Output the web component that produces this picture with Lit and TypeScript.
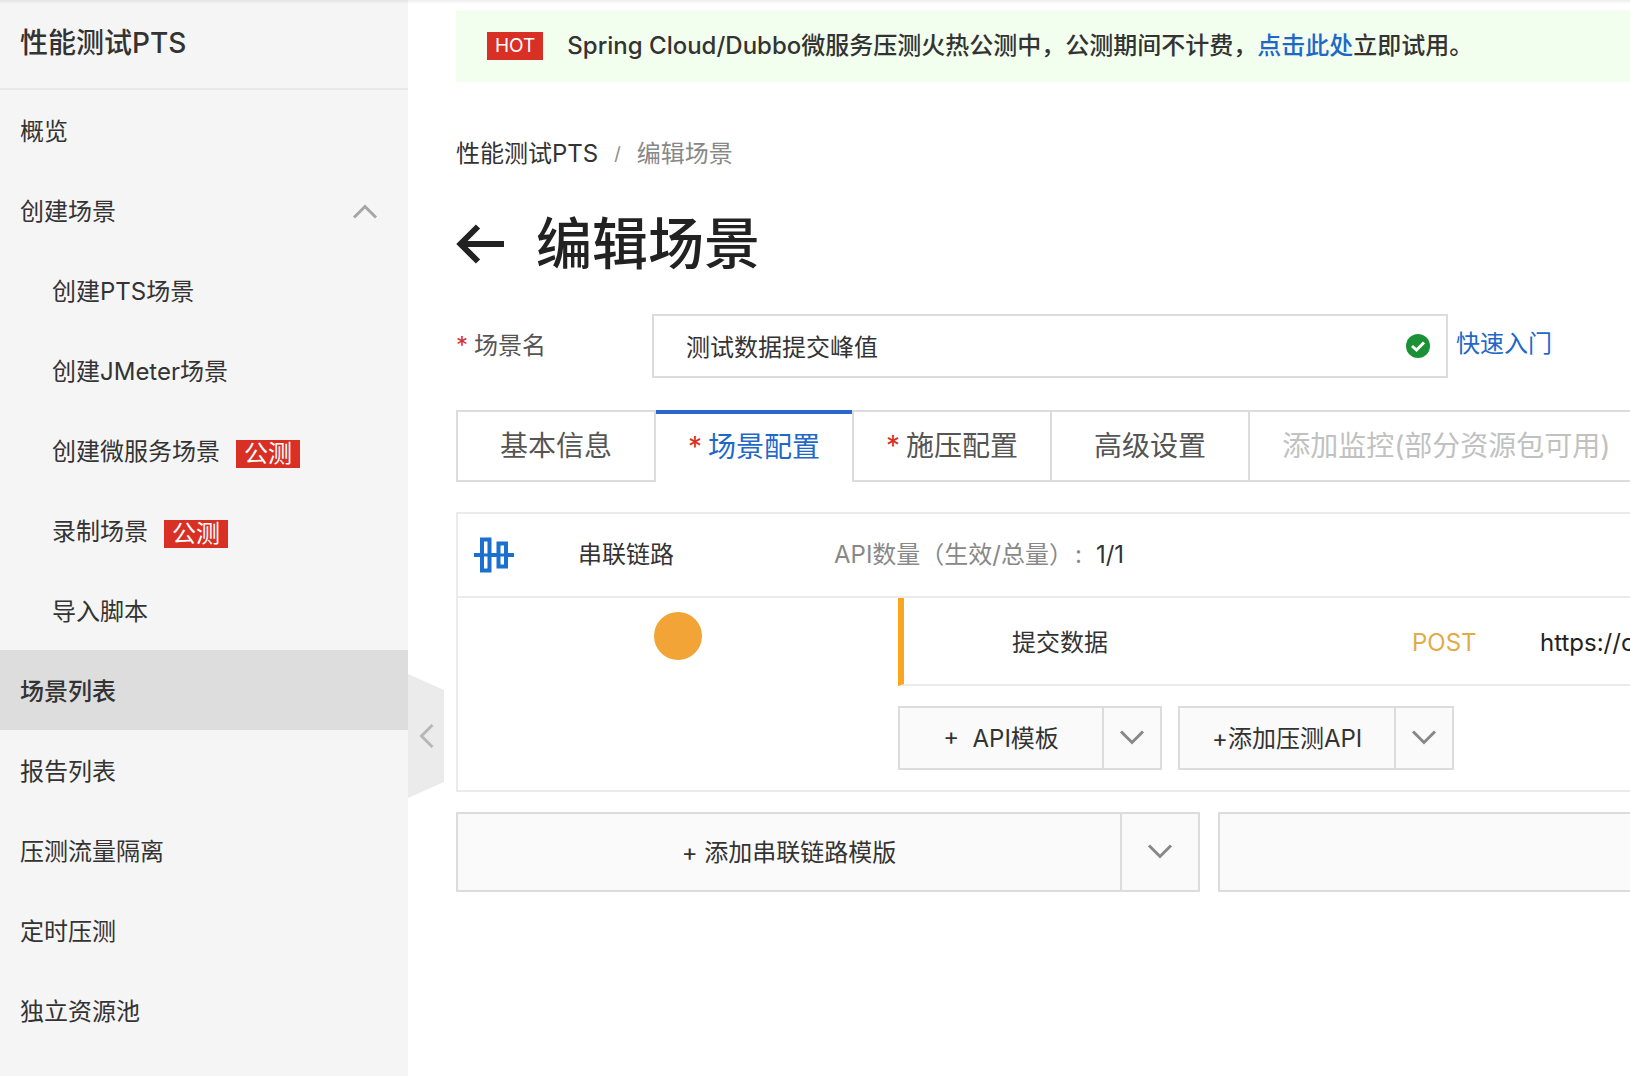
import { LitElement, html, css, svg } from "lit";
import { customElement, property, state } from "lit/decorators.js";
import { classMap } from "lit/directives/class-map.js";

interface NavItem {
  label: string;
  sub?: boolean;
  badge?: string;
  expanded?: boolean;
}

const NAV: NavItem[] = [
  { label: "概览" },
  { label: "创建场景", expanded: true },
  { label: "创建PTS场景", sub: true },
  { label: "创建JMeter场景", sub: true },
  { label: "创建微服务场景", sub: true, badge: "公测" },
  { label: "录制场景", sub: true, badge: "公测" },
  { label: "导入脚本", sub: true },
  { label: "场景列表" },
  { label: "报告列表" },
  { label: "压测流量隔离" },
  { label: "定时压测" },
  { label: "独立资源池" },
];

interface Tab {
  label: string;
  required?: boolean;
  disabled?: boolean;
}

const TABS: Tab[] = [
  { label: "基本信息" },
  { label: "场景配置", required: true },
  { label: "施压配置", required: true },
  { label: "高级设置" },
  { label: "添加监控(部分资源包可用)", disabled: true },
];

const CHEVRONS: Record<string, string> = {
  up: "M2 18.5 13 7.5 24 18.5",
  down: "M2 7.5 13 18.5 24 7.5",
  left: "M18.5 2 7.5 13 18.5 24",
};

@customElement("pts-chevron")
export class PtsChevron extends LitElement {
  @property() direction = "down";

  static styles = css`
    :host {
      display: block;
      width: 26px;
      height: 26px;
    }
    .icon {
      display: block;
    }
  `;

  render() {
    return html`<svg class="icon" width="26" height="26" viewBox="0 0 26 26" fill="none" aria-hidden="true">
      ${svg`<path d=${CHEVRONS[this.direction]} stroke="currentColor" stroke-width="3"/>`}
    </svg>`;
  }
}

@customElement("pts-sidebar")
export class PtsSidebar extends LitElement {
  @state() private current = "场景列表";

  static styles = css`
    :host {
      display: block;
      position: relative;
      background: #f5f5f5;
      color: #333;
    }
    .title {
      margin: 0;
      height: 90px;
      line-height: 86px;
      padding-left: 20px;
      border-bottom: 2px solid #e8e8e8;
      font-size: 28px;
      font-weight: 500;
      box-sizing: border-box;
    }
    .item {
      display: flex;
      align-items: center;
      height: 80px;
      padding: 4px 30px 0 20px;
      box-sizing: border-box;
      color: inherit;
      text-decoration: none;
      font-size: 24px;
      line-height: 32px;
    }
    .sub {
      padding-left: 52px;
    }
    .current {
      background: #ddd;
      font-weight: 500;
    }
    .badge {
      margin: 4px 0 0 16px;
      padding: 0 8px;
      height: 28px;
      line-height: 28px;
      background: #d93026;
      color: #fff;
    }
    .arrow {
      margin-left: auto;
      color: #a6a6a6;
    }
    .collapse {
      position: absolute;
      left: 100%;
      top: 674px;
      width: 36px;
      height: 124px;
      padding: 0 0 0 6px;
      border: 0;
      background: #ebebeb;
      color: #b8b8b8;
      clip-path: polygon(0 0, 100% 16px, 100% 108px, 0 100%);
    }
  `;

  private select(event: Event, label: string) {
    event.preventDefault();
    this.current = label;
  }

  render() {
    return html`
      <h2 class="title">性能测试PTS</h2>
      <nav>
        ${NAV.map(
          (item) => html`<a
            href="#"
            class=${classMap({ item: true, sub: !!item.sub, current: item.label === this.current })}
            @click=${(e: Event) => this.select(e, item.label)}
            ><span>${item.label}</span>${item.badge ? html`<span class="badge">${item.badge}</span>` : ""}${item.expanded
              ? html`<pts-chevron class="arrow" direction="up"></pts-chevron>`
              : ""}</a
          >`,
        )}
      </nav>
      <button class="collapse" aria-label="收起导航"><pts-chevron direction="left"></pts-chevron></button>
    `;
  }
}

@customElement("pts-split-button")
export class PtsSplitButton extends LitElement {
  @property() label = "";
  @property({ type: Boolean, reflect: true }) wide = false;

  static styles = css`
    :host {
      display: flex;
      height: 64px;
      box-sizing: border-box;
      border: 2px solid #dcdcdc;
      background: #fafafa;
    }
    :host([wide]) {
      height: 80px;
    }
    .main,
    .more {
      border: 0;
      background: none;
      font: inherit;
      font-size: 24px;
      line-height: 32px;
      color: #333;
      white-space: pre;
    }
    .main {
      flex: 1;
      padding: 2px 32px 0;
    }
    .more {
      display: flex;
      align-items: center;
      justify-content: center;
      width: 58px;
      padding: 0 0 2px;
      border-left: 2px solid #dcdcdc;
      color: #888;
    }
    :host([wide]) .more {
      width: 78px;
    }
  `;

  render() {
    return html`
      <button class="main">${this.label}</button>
      <button class="more" aria-label="更多选项"><pts-chevron></pts-chevron></button>
    `;
  }
}

@customElement("app-root")
export class AppRoot extends LitElement {
  @state() private tab = "场景配置";

  static styles = css`
    :host {
      display: block;
      position: relative;
      background: #fff;
      color: #333;
      font-family: Inter, "Noto Sans CJK SC", sans-serif;
      font-size: 24px;
      line-height: 32px;
    }
    .shade {
      position: absolute;
      inset: 0 0 auto 0;
      height: 4px;
      background: linear-gradient(rgba(0, 0, 0, 0.07), rgba(0, 0, 0, 0));
    }
    .shell {
      display: grid;
      grid-template-columns: 408px minmax(0, 1fr);
      min-height: 100vh;
    }
    .content {
      padding: 10px 0 40px 48px;
      overflow: hidden;
      white-space: nowrap;
    }
    .link {
      color: #1f68c8;
      text-decoration: none;
    }
    .banner {
      display: flex;
      align-items: center;
      height: 72px;
      box-sizing: border-box;
      padding-left: 31px;
      background: #f3ffee;
      font-weight: 500;
    }
    .hot {
      margin-right: 24px;
      padding: 0 8px;
      height: 28px;
      line-height: 28px;
      background: #d93026;
      color: #fff;
      font-size: 19px;
      font-weight: 400;
    }
    .crumbs {
      display: flex;
      align-items: center;
      gap: 16px;
      margin-top: 56px;
      color: #888;
    }
    .crumb {
      color: #333;
      text-decoration: none;
    }
    .slash {
      font-size: 18px;
    }
    .head {
      display: flex;
      align-items: center;
      gap: 32px;
      margin-top: 36px;
      height: 76px;
      color: #222;
    }
    .back {
      padding: 0;
      border: 0;
      background: none;
      color: inherit;
      line-height: 0;
    }
    .heading {
      margin: 0;
      font-size: 56px;
      line-height: 76px;
      font-weight: 500;
    }
    .field {
      display: flex;
      align-items: center;
      margin-top: 32px;
    }
    .label {
      width: 196px;
      color: #555;
    }
    .star {
      margin-right: 6px;
      color: #d93026;
    }
    .box {
      display: flex;
      align-items: center;
      width: 796px;
      height: 64px;
      box-sizing: border-box;
      padding: 0 16px 0 32px;
      border: 2px solid #dcdcdc;
    }
    .input {
      flex: 1;
      min-width: 0;
      padding: 4px 0 0;
      border: 0;
      outline: 0;
      background: none;
      color: #333;
      font: inherit;
    }
    .quick {
      margin: 0 0 4px 8px;
    }
    .tabs {
      display: flex;
      height: 72px;
      margin-top: 32px;
    }
    .tab {
      box-sizing: border-box;
      padding: 0 42px;
      border: solid #dcdcdc;
      border-width: 2px 0 2px 2px;
      background: none;
      color: #555;
      font: inherit;
      font-size: 28px;
    }
    .starred {
      padding: 0 32px;
    }
    .active {
      border-color: #2b67cb;
      border-width: 4px 0 0 0;
      padding-bottom: 2px;
      color: #1f68c8;
    }
    .before-active {
      border-right-width: 2px;
    }
    .disabled {
      flex: 1;
      padding: 0 0 0 32px;
      color: #c1c1c1;
      text-align: left;
    }
    .card {
      margin-top: 30px;
      border: 2px solid #ebebeb;
      border-right: 0;
    }
    .chain {
      display: grid;
      grid-template-columns: 104px 256px 1fr;
      align-items: center;
      height: 82px;
      padding-left: 16px;
      border-bottom: 2px solid #ebebeb;
    }
    .count {
      color: #888;
    }
    .colon {
      margin: 0 14px 0 2px;
    }
    .value {
      color: #333;
    }
    .body {
      display: grid;
      grid-template-columns: 440px minmax(0, 1fr);
      padding-bottom: 20px;
    }
    .dot {
      width: 48px;
      height: 48px;
      margin: 14px auto 0;
      border-radius: 50%;
      background: #f2a436;
    }
    .api {
      display: grid;
      grid-template-columns: 400px 128px minmax(0, 1fr);
      align-items: center;
      height: 88px;
      box-sizing: border-box;
      padding: 4px 0 0 108px;
      border-left: 6px solid #faa61f;
      border-bottom: 2px solid #ebebeb;
    }
    .method {
      color: #e2ab48;
    }
    .url {
      color: #222;
    }
    .actions {
      display: flex;
      gap: 16px;
      margin-top: 20px;
    }
    .template {
      width: 264px;
    }
    .add {
      width: 276px;
    }
    .footer {
      display: flex;
      gap: 18px;
      margin-top: 20px;
    }
    .chain-add {
      width: 744px;
    }
    .extra {
      flex: 1;
      height: 80px;
      border: 2px solid #dcdcdc;
      border-right: 0;
      background: #fafafa;
    }
  `;

  render() {
    const active = TABS.findIndex((t) => t.label === this.tab);
    return html`
      <div class="shell">
        <pts-sidebar></pts-sidebar>
        <main class="content">
          <div class="banner">
            <span class="hot">HOT</span>
            <span
              >Spring Cloud/Dubbo微服务压测火热公测中，公测期间不计费，<a class="link" href="#">点击此处</a>立即试用。</span
            >
          </div>
          <div class="crumbs">
            <a class="crumb" href="#">性能测试PTS</a><span class="slash">/</span><span>编辑场景</span>
          </div>
          <div class="head">
            <button class="back" aria-label="返回">
              <svg width="48" height="40" viewBox="0 0 48 40" fill="none" stroke="currentColor" stroke-width="6">
                <path d="M48 20H5M22 2.500 4.500 20 22 37.500" />
              </svg>
            </button>
            <h1 class="heading">编辑场景</h1>
          </div>
          <div class="field">
            <label class="label" for="scene"><span class="star">*</span>场景名</label>
            <div class="box">
              <input class="input" id="scene" type="text" value="测试数据提交峰值" />
              <svg width="24" height="24" viewBox="0 0 24 24" fill="none" aria-hidden="true">
                <circle cx="12" cy="12" r="12" fill="#1b9136" />
                <path d="M6 12 10.500 16 18 8.500" stroke="#fff" stroke-width="3" />
              </svg>
            </div>
            <a class="link quick" href="#">快速入门</a>
          </div>
          <div class="tabs" role="tablist">
            ${TABS.map(
              (t, i) => html`<button
                role="tab"
                aria-selected=${i === active ? "true" : "false"}
                ?disabled=${t.disabled}
                class=${classMap({
                  tab: true,
                  starred: !!t.required,
                  active: i === active,
                  "before-active": i === active - 1,
                  disabled: !!t.disabled,
                })}
                @click=${() => (this.tab = t.label)}
              >
                ${t.required ? html`<span class="star">*</span>` : ""}${t.label}
              </button>`,
            )}
          </div>
          <section class="card">
            <div class="chain">
              <svg width="40" height="36" viewBox="0 0 40 36" fill="none" stroke="#1b6fcf" aria-hidden="true">
                <path d="M0 18H7M16 18H24M33 18H40" stroke-width="4" />
                <path d="M8 2.500H15.500V33.500H8ZM24.500 6.500H32V29.500H24.500Z" stroke-width="4" />
                <path d="M6 18H17M23 18H34" stroke-width="3" />
              </svg>
              <span>串联链路</span>
              <span class="count"
                >API数量（生效/总量）<span class="colon">:</span><span class="value">1/1</span></span
              >
            </div>
            <div class="body">
              <div class="dot"></div>
              <div>
                <div class="api">
                  <span>提交数据</span>
                  <span class="method">POST</span>
                  <span class="url">https://c</span>
                </div>
                <div class="actions">
                  <pts-split-button class="template" label="+  API模板"></pts-split-button>
                  <pts-split-button class="add" label="+添加压测API"></pts-split-button>
                </div>
              </div>
            </div>
          </section>
          <div class="footer">
            <pts-split-button class="chain-add" wide label="+ 添加串联链路模版"></pts-split-button>
            <button class="extra" aria-label="添加链路"></button>
          </div>
        </main>
      </div>
      <div class="shade"></div>
    `;
  }
}
